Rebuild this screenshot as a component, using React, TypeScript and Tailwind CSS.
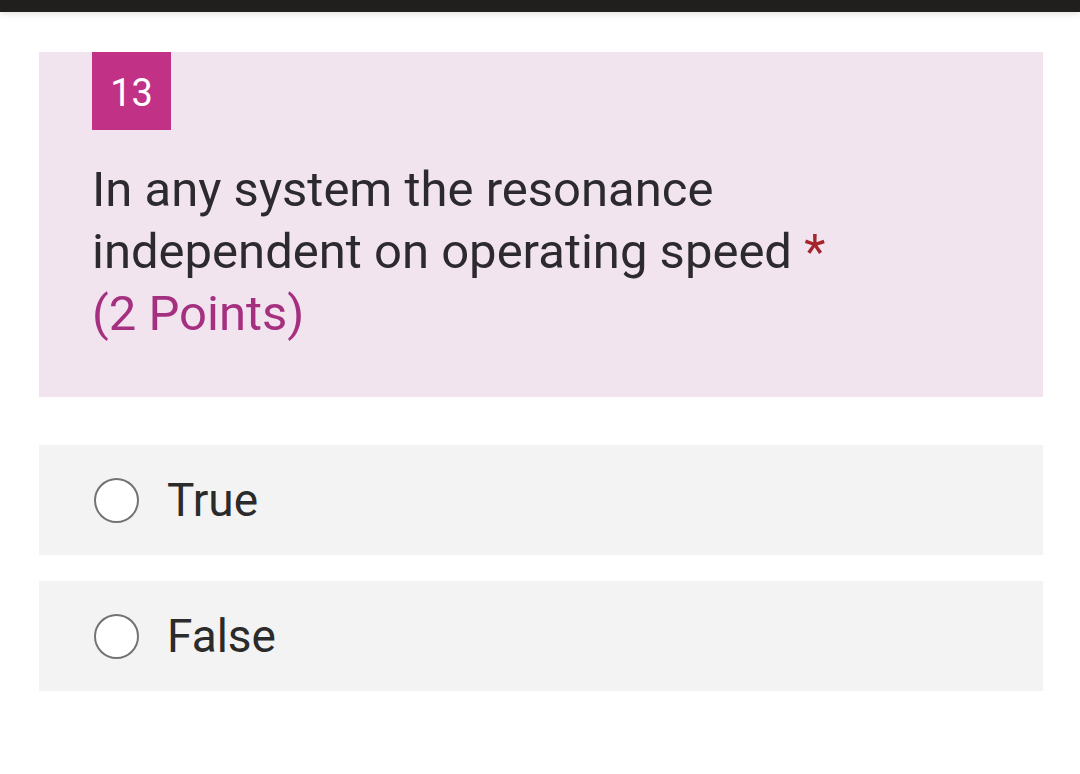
import React from "react";

function Option({ label }: { label: string }) {
  return (
    <div className="flex items-center h-[110px] bg-[#f3f3f3] pl-[55px]">
      <span className="w-[45px] h-[45px] rounded-full border-[2.5px] border-[#737373] bg-white shrink-0" />
      <span className="ml-[28px] text-[46px] leading-none text-[#2b2b2b]">{label}</span>
    </div>
  );
}

export default function App() {
  return (
    <div className="w-[1080px] h-[774px] bg-white overflow-hidden" style={{ fontFamily: "Roboto, 'Liberation Sans', sans-serif" }}>
      <div className="h-[12px] bg-[#201f1d] shadow-[0_2px_6px_rgba(0,0,0,0.12)]" />
      <div className="ml-[39px] mr-[37px] mt-[40px]">
        <div className="bg-[#f1e4ee] h-[345px] pl-[53px]">
          <div className="w-[79px] h-[78px] bg-[#c13287] flex items-center justify-center pt-[4px] text-white text-[38px]">13</div>
          <div className="mt-[29px] text-[49px] leading-[62px] text-[#2c2a2e]">
            <div>In any system the resonance</div>
            <div>
              independent on operating speed <span className="text-[#a4262c]">*</span>
            </div>
            <div className="text-[#a53080]">(2 Points)</div>
          </div>
        </div>
        <div className="mt-[48px] flex flex-col gap-[26px]">
          <Option label="True" />
          <Option label="False" />
        </div>
      </div>
    </div>
  );
}
